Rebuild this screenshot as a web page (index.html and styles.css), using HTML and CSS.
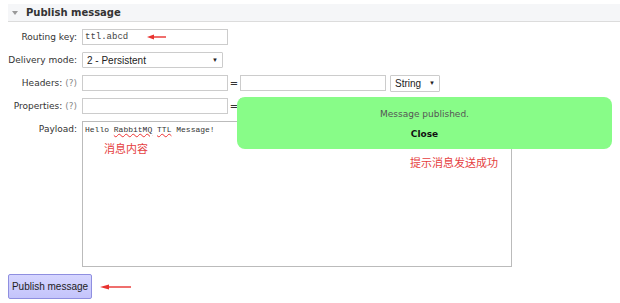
FILE: index.html
```html
<!DOCTYPE html>
<html lang="en">
<head>
    <meta charset="UTF-8">
    <title>Publish message</title>
    <link rel="stylesheet" href="styles.css">
</head>
<body>

    <div class="panel">
        <div class="panel-head">
            <span class="tri"></span>
            <h2>Publish message</h2>
        </div>

        <form class="pub">
            <label>Routing key:</label>
            <div class="field">
                <input class="rk" type="text" value="ttl.abcd">
                <svg class="arrow a1" width="20" height="6" viewBox="0 0 20 6">
                    <path d="M5 3 L19 3" stroke="#e8322f" stroke-width="1.4"/>
                    <path d="M0 3 L7 0.5 L7 5.5 Z" fill="#e8322f"/>
                </svg>
            </div>

            <label>Delivery mode:</label>
            <div class="field">
                <div class="sel wide">2 - Persistent <span class="caret">&#9660;</span></div>
            </div>

            <label>Headers: <span class="help">(?)</span></label>
            <div class="field">
                <input class="kv" type="text">
                <span class="eq">=</span>
                <input class="kv" type="text">
                <div class="sel small">String <span class="caret">&#9660;</span></div>
            </div>

            <label>Properties: <span class="help">(?)</span></label>
            <div class="field">
                <input class="kv" type="text">
                <span class="eq">=</span>
                <input class="kv" type="text">
            </div>

            <label class="top">Payload:</label>
            <div class="field">
                <div class="payload">
                    <span class="typed">Hello <u>RabbitMQ</u> <u>TTL</u> Message!</span>
                    <span class="note n1">消息内容</span>
                    <span class="note n2">提示消息发送成功</span>
                </div>
            </div>
        </form>

        <div class="actions">
            <button type="button">Publish message</button>
            <svg class="arrow a2" width="32" height="6" viewBox="0 0 32 6">
                <path d="M6 3 L31 3" stroke="#e8322f" stroke-width="1.4"/>
                <path d="M0 3 L9 0.5 L9 5.5 Z" fill="#e8322f"/>
            </svg>
        </div>
    </div>

    <div class="popup">
        <p>Message published.</p>
        <p class="close">Close</p>
    </div>

</body>
</html>
```
FILE: styles.css
```css
body {
    margin: 0;
    background: #fff;
    font-family: "DejaVu Sans", Verdana, sans-serif;
    color: #333;
    position: relative;
    width: 620px;
    height: 303px;
    overflow: hidden;
}

.panel {
    padding: 4px 0 0 8px;
}

.panel-head {
    display: flex;
    align-items: center;
    height: 17px;
    background: #f5f6f8;
    border-bottom: 1px solid #dcdcdc;
    padding-left: 4px;
}

.tri {
    width: 0;
    height: 0;
    border-left: 3px solid transparent;
    border-right: 3px solid transparent;
    border-top: 4px solid #999;
    margin-right: 8px;
}

.panel-head h2 {
    margin: 0;
    font-size: 10px;
    font-weight: bold;
    color: #333;
}

.pub {
    display: grid;
    grid-template-columns: 69px 1fr;
    column-gap: 5px;
    row-gap: 7px;
    margin-top: 7px;
    align-items: center;
}

.pub label {
    text-align: right;
    font-size: 9px;
    color: #333;
    white-space: nowrap;
}

.pub label.top {
    align-self: start;
    padding-top: 3px;
}

.help {
    color: #888;
}

.field {
    display: flex;
    align-items: center;
    height: 16px;
}

input {
    box-sizing: border-box;
    height: 16px;
    border: 1px solid #ccc;
    margin: 0;
    padding: 0 2px;
    background: #fff;
}

.rk {
    width: 146px;
    font-family: "Liberation Mono", monospace;
    font-size: 9px;
    color: #444;
}

.kv {
    width: 146px;
}

.eq {
    font-size: 10px;
    width: 12px;
    text-align: center;
    color: #333;
}

.sel {
    box-sizing: border-box;
    height: 16px;
    border: 1px solid #ccc;
    border-radius: 1px;
    font-family: "Liberation Sans", Arial, sans-serif;
    font-size: 10px;
    color: #222;
    display: flex;
    align-items: center;
    justify-content: space-between;
    padding: 0 4px;
    background: #fff;
}

.sel.wide {
    width: 141px;
}

.sel.small {
    width: 50px;
    height: 17px;
    margin-left: 4px;
}

.caret {
    font-size: 6px;
}

.a1 {
    margin-left: -81px;
}

.pub .field:last-child {
    height: 146px;
    align-items: flex-start;
}

.payload {
    box-sizing: border-box;
    position: relative;
    width: 430px;
    height: 146px;
    border: 1px solid #bbb;
    padding: 2px;
    background: #fff;
    font-size: 8px;
    line-height: 11px;
}

.typed {
    font-family: "Liberation Mono", monospace;
    font-size: 8px;
    color: #333;
}

.typed u {
    text-decoration: underline wavy #e33;
    text-decoration-thickness: 1px;
    text-underline-offset: 1px;
}

.note {
    position: absolute;
    font-family: "Noto Sans CJK SC", serif;
    font-size: 11px;
    line-height: 14px;
    color: #e54040;
}

.n1 {
    left: 21px;
    top: 19px;
}

.n2 {
    left: 327px;
    top: 33px;
}

.actions {
    display: flex;
    align-items: center;
    margin-top: 7px;
}

button {
    width: 84px;
    height: 25px;
    border: 1px solid #8f8fe0;
    border-radius: 2px;
    background: linear-gradient(#d6d6ff, #c4c4fb);
    font-family: "Liberation Sans", Arial, sans-serif;
    font-size: 10px;
    color: #222;
    padding: 0;
}

.a2 {
    margin-left: 8px;
}

.popup {
    position: absolute;
    left: 237px;
    top: 97px;
    width: 375px;
    height: 52px;
    box-sizing: border-box;
    background: #88fc88;
    border-radius: 8px;
    text-align: center;
    padding-top: 12px;
}

.popup p {
    margin: 0;
    font-size: 9px;
    color: #555;
}

.popup .close {
    margin-top: 10px;
    font-weight: bold;
    color: #111;
}
```
